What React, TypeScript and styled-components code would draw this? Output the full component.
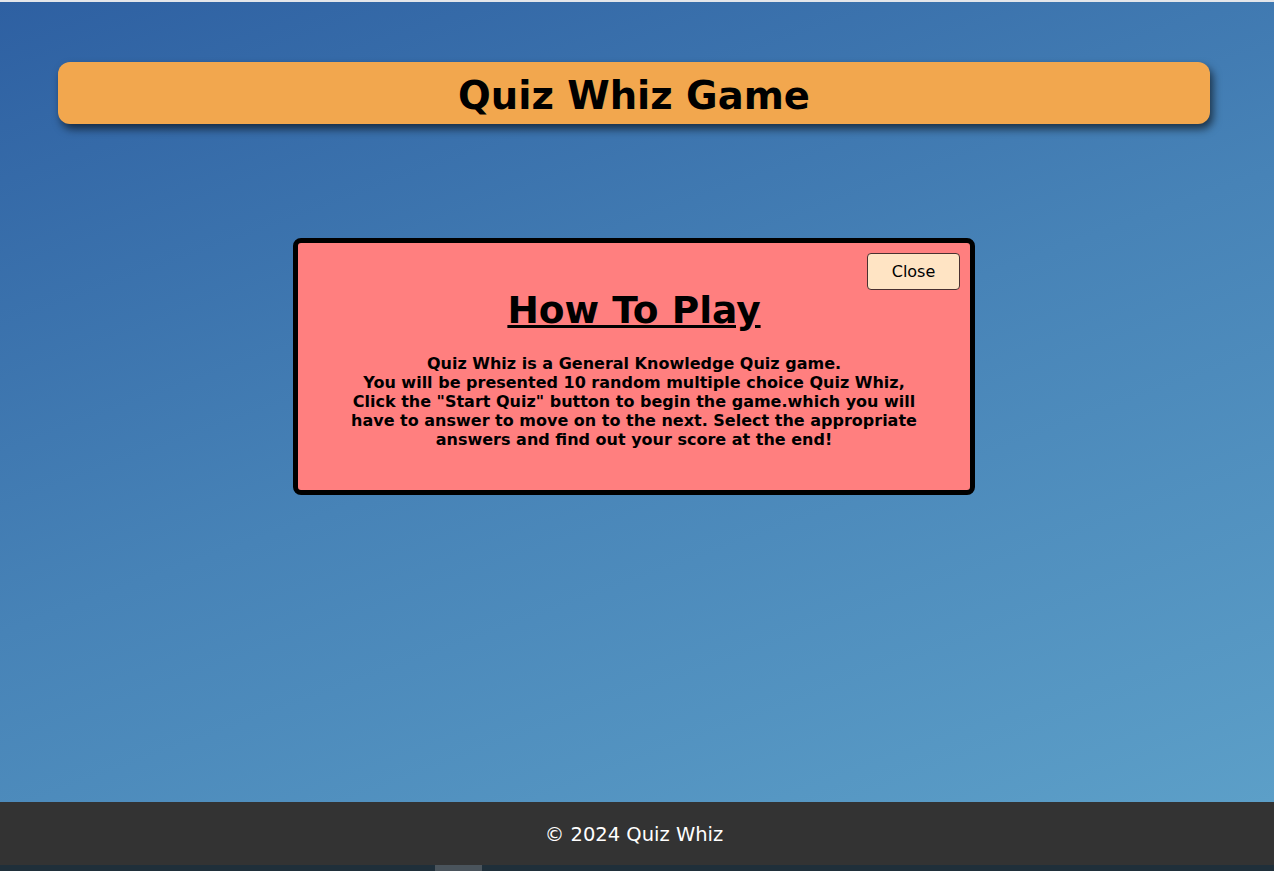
import React from "react";
import styled, { createGlobalStyle } from "styled-components";

const Global = createGlobalStyle`
  html, body { margin: 0; padding: 0; }
  body { font-family: "DejaVu Sans", Verdana, sans-serif; background: #1f2f3a; }
`;

const Page = styled.div`
  width: 1274px;
  height: 871px;
  display: flex;
  flex-direction: column;
  overflow: hidden;
`;

const TopLine = styled.div`
  height: 2px;
  background: #e4e6ea;
  flex: none;
`;

const Main = styled.main`
  flex: none;
  height: 800px;
  background: linear-gradient(160deg, #2e60a2 0%, #4783b7 50%, #5c9fc8 100%);
  padding: 60px 64px 0 58px;
  box-sizing: border-box;
  display: flex;
  flex-direction: column;
  align-items: center;
`;

const Header = styled.header`
  width: 100%;
  height: 62px;
  box-sizing: border-box;
  padding-top: 4px;
  background: #f2a74e;
  border-radius: 12px;
  box-shadow: 3px 5px 8px rgba(0, 0, 0, 0.6);
  display: flex;
  align-items: center;
  justify-content: center;
`;

const Title = styled.h1`
  margin: 0;
  font-size: 38.5px;
  font-weight: bold;
  color: #000;
`;

const Modal = styled.section`
  margin-top: 114px;
  width: 682px;
  height: 257px;
  box-sizing: border-box;
  background: #ff7f7f;
  border: 5px solid #000;
  border-radius: 8px;
  position: relative;
  display: flex;
  flex-direction: column;
  align-items: center;
  padding-top: 45px;
`;

const CloseButton = styled.button`
  position: absolute;
  top: 10px;
  right: 10px;
  width: 93px;
  height: 37px;
  background: #ffe4c4;
  border: 1px solid #4a3030;
  border-radius: 4px;
  font-family: "DejaVu Sans", Verdana, sans-serif;
  font-size: 16px;
  color: #000;
`;

const ModalTitle = styled.h2`
  margin: 0;
  font-size: 37.5px;
  font-weight: bold;
  text-decoration: underline;
  color: #000;
`;

const Body = styled.p`
  margin: 22px 0 0;
  width: 572px;
  text-align: center;
  font-size: 16px;
  line-height: 19px;
  font-weight: bold;
  color: #000;
`;

const Footer = styled.footer`
  flex: none;
  height: 63px;
  box-sizing: border-box;
  padding: 2px 6px 0 0;
  background: #333;
  display: flex;
  align-items: center;
  justify-content: center;
  color: #fff;
  font-size: 19.5px;
`;

const BottomStrip = styled.div`
  flex: 1;
  background: #1f2f3a;
  position: relative;
`;

const StripBlock = styled.div`
  position: absolute;
  left: 435px;
  top: 0;
  width: 47px;
  height: 100%;
  background: #4a545c;
`;

export default function App() {
  return (
    <>
      <Global />
      <Page>
        <TopLine />
        <Main>
          <Header>
            <Title>Quiz Whiz Game</Title>
          </Header>
          <Modal>
            <CloseButton>Close</CloseButton>
            <ModalTitle>How To Play</ModalTitle>
            <Body>
              Quiz Whiz is a General Knowledge Quiz game.
              <br />
              You will be presented 10 random multiple choice Quiz Whiz, Click the "Start Quiz" button to begin the
              game.which you will have to answer to move on to the next. Select the appropriate answers and find out
              your score at the end!
            </Body>
          </Modal>
        </Main>
        <Footer>© 2024 Quiz Whiz</Footer>
        <BottomStrip>
          <StripBlock />
        </BottomStrip>
      </Page>
    </>
  );
}
